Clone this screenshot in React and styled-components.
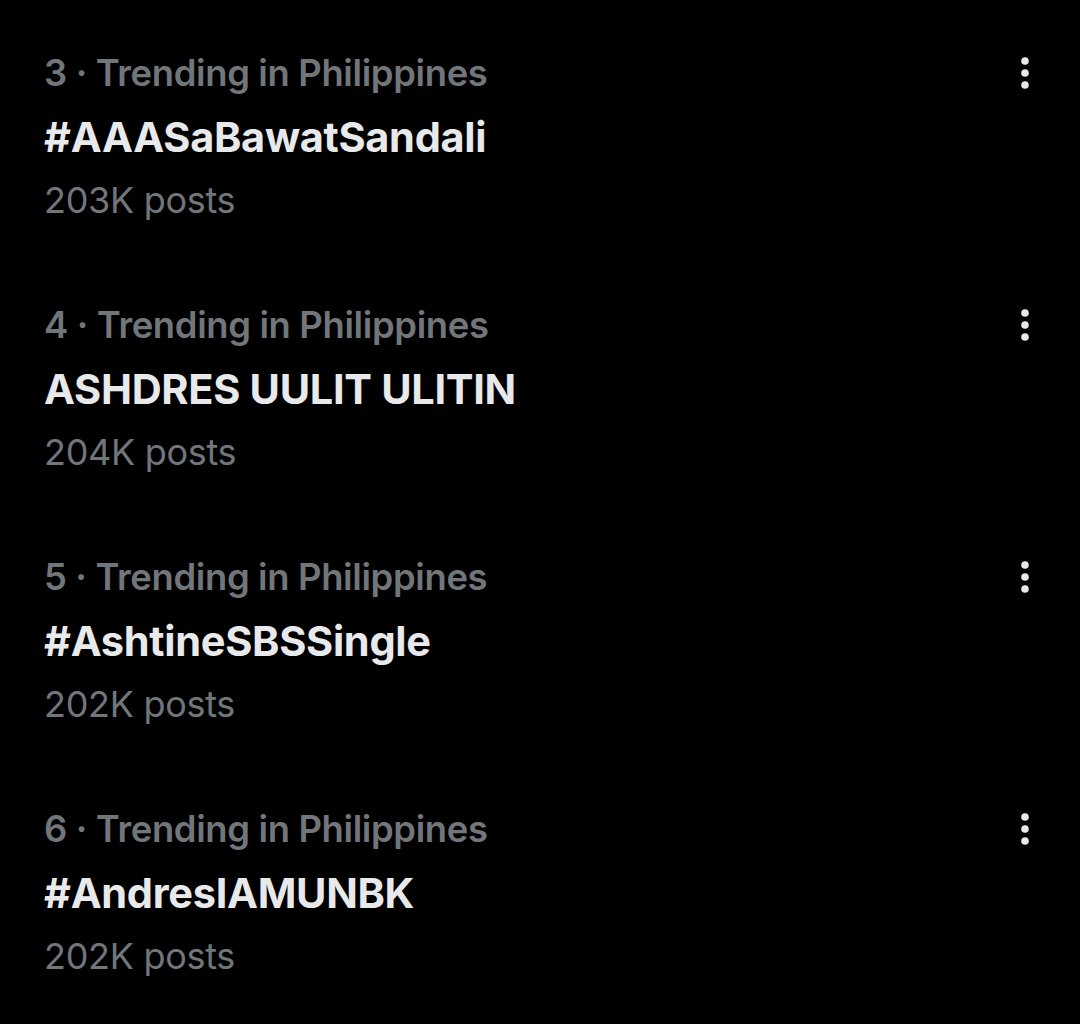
import React from "react";
import styled, { createGlobalStyle } from "styled-components";

const GlobalStyle = createGlobalStyle`
  html, body {
    margin: 0;
    padding: 0;
    background: #000;
  }
  body {
    font-family: Inter, "Noto Sans", "Liberation Sans", sans-serif;
  }
`;

const TrendList = styled.div`
  width: 1080px;
  min-height: 1024px;
  background: #000;
  padding-top: 11px;
  box-sizing: border-box;
`;

const TrendItem = styled.div`
  display: flex;
  justify-content: space-between;
  align-items: flex-start;
  padding: 31px 43px 31px 44px;
`;

const TrendText = styled.div`
  display: flex;
  flex-direction: column;
`;

const Meta = styled.div`
  color: #71767b;
  font-size: 36.4px;
  font-weight: 600;
  line-height: 63px;
  letter-spacing: -0.35px;
`;

const Title = styled.div`
  color: #e7e9ea;
  font-size: 41.5px;
  font-weight: 700;
  line-height: 64px;
  letter-spacing: -0.3px;
`;

const Posts = styled.div`
  color: #71767b;
  font-size: 36px;
  font-weight: 400;
  line-height: 63px;
  letter-spacing: -0.3px;
`;

const MoreButton = styled.div`
  width: 24px;
  height: 40px;
  margin-top: 11px;
  display: flex;
  align-items: center;
  justify-content: center;
`;

const MoreIcon = () => (
  <svg width="10" height="34" viewBox="0 0 10 34">
    <circle cx="5" cy="5" r="3.8" fill="#e7e9ea" />
    <circle cx="5" cy="17" r="3.8" fill="#e7e9ea" />
    <circle cx="5" cy="29" r="3.8" fill="#e7e9ea" />
  </svg>
);

const trends = [
  { rank: 3, title: "#AAASaBawatSandali", posts: "203K posts" },
  { rank: 4, title: "ASHDRES UULIT ULITIN", posts: "204K posts" },
  { rank: 5, title: "#AshtineSBSSingle", posts: "202K posts" },
  { rank: 6, title: "#AndresIAMUNBK", posts: "202K posts" },
];

const App = () => {
  return (
    <>
      <GlobalStyle />
      <TrendList>
        {trends.map((t) => (
          <TrendItem key={t.rank}>
            <TrendText>
              <Meta>{t.rank} · Trending in Philippines</Meta>
              <Title>{t.title}</Title>
              <Posts>{t.posts}</Posts>
            </TrendText>
            <MoreButton>
              <MoreIcon />
            </MoreButton>
          </TrendItem>
        ))}
      </TrendList>
    </>
  );
};

export default App;
